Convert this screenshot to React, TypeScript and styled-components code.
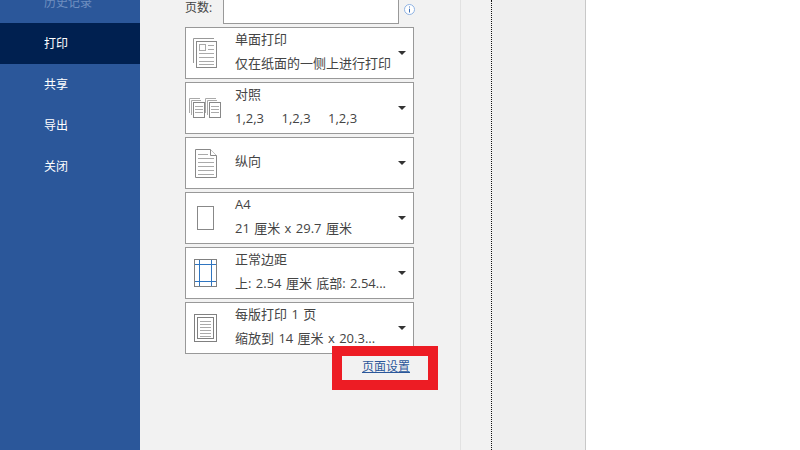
import { FC, ReactNode } from 'react';
import styled, { createGlobalStyle } from 'styled-components';

const GlobalStyle = createGlobalStyle`
  html, body {
    margin: 0;
    padding: 0;
    height: 100%;
    overflow: hidden;
    background: #fff;
    font-family: "Open Sans", "Noto Sans CJK SC", sans-serif;
  }
`;

const Page = styled.div`
  display: flex;
  width: 800px;
  height: 450px;
  overflow: hidden;
`;

const Sidebar = styled.nav`
  width: 140px;
  flex: none;
  background: #2b579a;
`;

const NavList = styled.div`
  margin-top: -18px;
`;

const NavItem = styled.div<{ $active?: boolean; $faded?: boolean }>`
  height: 41px;
  line-height: 41px;
  padding-left: 44px;
  font-size: 12px;
  color: ${({ $faded }) => ($faded ? '#6f8fc0' : '#fff')};
  background: ${({ $active }) => ($active ? '#002050' : 'transparent')};
`;

const SettingsPanel = styled.section`
  width: 321px;
  flex: none;
  box-sizing: border-box;
  padding-left: 45px;
  background: #f2f2f2;
  border-right: 1px solid #e2e2e2;
`;

const PagesRow = styled.div`
  display: flex;
  align-items: flex-end;
  height: 24px;
  margin-bottom: 3px;
  font-size: 12px;
  color: #444;
`;

const PagesLabel = styled.span`
  width: 38px;
  line-height: 18px;
  padding-bottom: 7px;
`;

const PagesInput = styled.div`
  width: 176px;
  height: 30px;
  box-sizing: border-box;
  background: #fff;
  border: 1px solid #999;
`;

const InfoIcon = styled.svg`
  width: 11px;
  height: 11px;
  margin: 0 0 9px 5px;
`;

const OptionList = styled.div`
  display: flex;
  flex-direction: column;
  gap: 3px;
  width: 229px;
`;

const Option = styled.div`
  display: flex;
  align-items: center;
  height: 52px;
  box-sizing: border-box;
  background: #fff;
  border: 1px solid #999;
  color: #444;
`;

const IconSlot = styled.div`
  width: 39px;
  height: 50px;
  flex: none;
  margin-right: 10px;
  display: flex;
  align-items: center;
  justify-content: center;
`;

const OptionText = styled.div`
  flex: 1;
  display: flex;
  flex-direction: column;
  justify-content: center;
  gap: 4px;
  padding-bottom: 5px;
  font-size: 13px;
  line-height: 20px;
  word-spacing: 1px;
  white-space: pre;
`;

const Caret = styled.div`
  width: 0;
  height: 0;
  margin: 0 7px 1px 0;
  border-left: 4px solid transparent;
  border-right: 4px solid transparent;
  border-top: 4px solid #333;
`;

const LinkRow = styled.div`
  position: relative;
  width: 225px;
  text-align: right;
`;

const SetupLink = styled.a`
  font-size: 12px;
  line-height: 17px;
  color: #2b579a;
  text-decoration: underline;
`;

const Highlight = styled.div`
  position: absolute;
  left: 147px;
  top: -8px;
  width: 106px;
  height: 44px;
  box-sizing: border-box;
  border: 10px solid #ed1c24;
`;

const Gutter = styled.div`
  width: 30px;
  flex: none;
  background: #f2f2f2;
  border-right: 1px dotted #111;
`;

const PreviewArea = styled.div`
  width: 93px;
  flex: none;
  background: #efefef;
  border-right: 1px solid #c8c8c8;
`;

const PageBlank = styled.div`
  flex: 1;
  background: #fff;
`;

const SinglePageIcon = () => (
  <svg width="25" height="30" viewBox="0 0 25 30" fill="none" stroke="#999">
    <path d="M.5 25V.5H21" />
    <rect x="3.5" y="3.5" width="20" height="26" stroke="#888" fill="#fff" />
    <rect x="6.5" y="6.5" width="6" height="6" stroke="#aaa" />
    <path d="M15 7.5h6M15 11.5h6M6 15.5h15M6 19.5h15M6 23.5h15M6 26.5h15" stroke="#aaa" />
  </svg>
);

const MiniStack: FC<{ x: number }> = ({ x }) => (
  <g transform={`translate(${x} 0)`}>
    <path d="M.5 15V.5H11M2.5 17V2.5H12" stroke="#aaa" />
    <rect x="4.5" y="4.5" width="11" height="15" stroke="#888" fill="#fff" />
    <path d="M6 8.5h8M6 11.5h8M6 14.5h8" stroke="#aaa" />
  </g>
);

const CollateIcon = () => (
  <svg width="33" height="20" viewBox="0 0 33 20" fill="none">
    <MiniStack x={0} />
    <MiniStack x={16} />
  </svg>
);

const PortraitIcon = () => (
  <svg width="22" height="29" viewBox="0 0 22 29" fill="#fff" stroke="#888">
    <path d="M.5.5h15l6 6v22H.5z" />
    <path d="M15.5.5v6h6" />
    <path d="M3 5.5h10M3 9.5h16M3 13.5h16M3 17.5h16M3 21.5h16M3 25.5h16" stroke="#aaa" />
  </svg>
);

const PaperIcon = () => (
  <svg width="17" height="24" viewBox="0 0 17 24" fill="#fff" stroke="#888">
    <rect x=".5" y=".5" width="16" height="23" />
  </svg>
);

const MarginsIcon = () => (
  <svg width="23" height="28" viewBox="0 0 23 28" fill="#fff">
    <rect x=".5" y=".5" width="22" height="27" stroke="#808080" />
    <path d="M5.5 1v26M17.5 1v26M1 5.5h21M1 22.5h21" stroke="#2f75c0" fill="none" />
  </svg>
);

const PerSheetIcon = () => (
  <svg width="23" height="28" viewBox="0 0 23 28" fill="#fff" stroke="#808080">
    <rect x=".5" y=".5" width="22" height="27" />
    <rect x="3.5" y="3.5" width="16" height="21" />
    <path d="M6 7.5h11M6 10.5h11M6 13.5h11M6 16.5h11M6 19.5h11M6 22.5h11" stroke="#aaa" />
  </svg>
);

interface PrintOption {
  icon: ReactNode;
  title: string;
  detail?: string;
}

const options: PrintOption[] = [
  { icon: <SinglePageIcon />, title: '单面打印', detail: '仅在纸面的一侧上进行打印' },
  { icon: <CollateIcon />, title: '对照', detail: '1,2,3    1,2,3    1,2,3' },
  { icon: <PortraitIcon />, title: '纵向' },
  { icon: <PaperIcon />, title: 'A4', detail: '21 厘米 x 29.7 厘米' },
  { icon: <MarginsIcon />, title: '正常边距', detail: '上: 2.54 厘米 底部: 2.54...' },
  { icon: <PerSheetIcon />, title: '每版打印 1 页', detail: '缩放到 14 厘米 x 20.3...' },
];

const App: FC = () => (
  <Page>
    <GlobalStyle />
    <Sidebar>
      <NavList>
        <NavItem $faded>历史记录</NavItem>
        <NavItem $active>打印</NavItem>
        <NavItem>共享</NavItem>
        <NavItem>导出</NavItem>
        <NavItem>关闭</NavItem>
      </NavList>
    </Sidebar>
    <SettingsPanel>
      <PagesRow>
        <PagesLabel>页数:</PagesLabel>
        <PagesInput />
        <InfoIcon viewBox="0 0 11 11">
          <circle cx="5.5" cy="5.5" r="5" fill="#fff" stroke="#8fb3e3" />
          <path d="M5.5 2.5v1M5.5 4.7V8.5" stroke="#3f6fb5" fill="none" />
        </InfoIcon>
      </PagesRow>
      <OptionList>
        {options.map(({ icon, title, detail }) => (
          <Option key={title}>
            <IconSlot>{icon}</IconSlot>
            <OptionText>
              <span>{title}</span>
              {detail && <span>{detail}</span>}
            </OptionText>
            <Caret />
          </Option>
        ))}
      </OptionList>
      <LinkRow>
        <SetupLink>页面设置</SetupLink>
        <Highlight />
      </LinkRow>
    </SettingsPanel>
    <Gutter />
    <PreviewArea />
    <PageBlank />
  </Page>
);

export default App;
